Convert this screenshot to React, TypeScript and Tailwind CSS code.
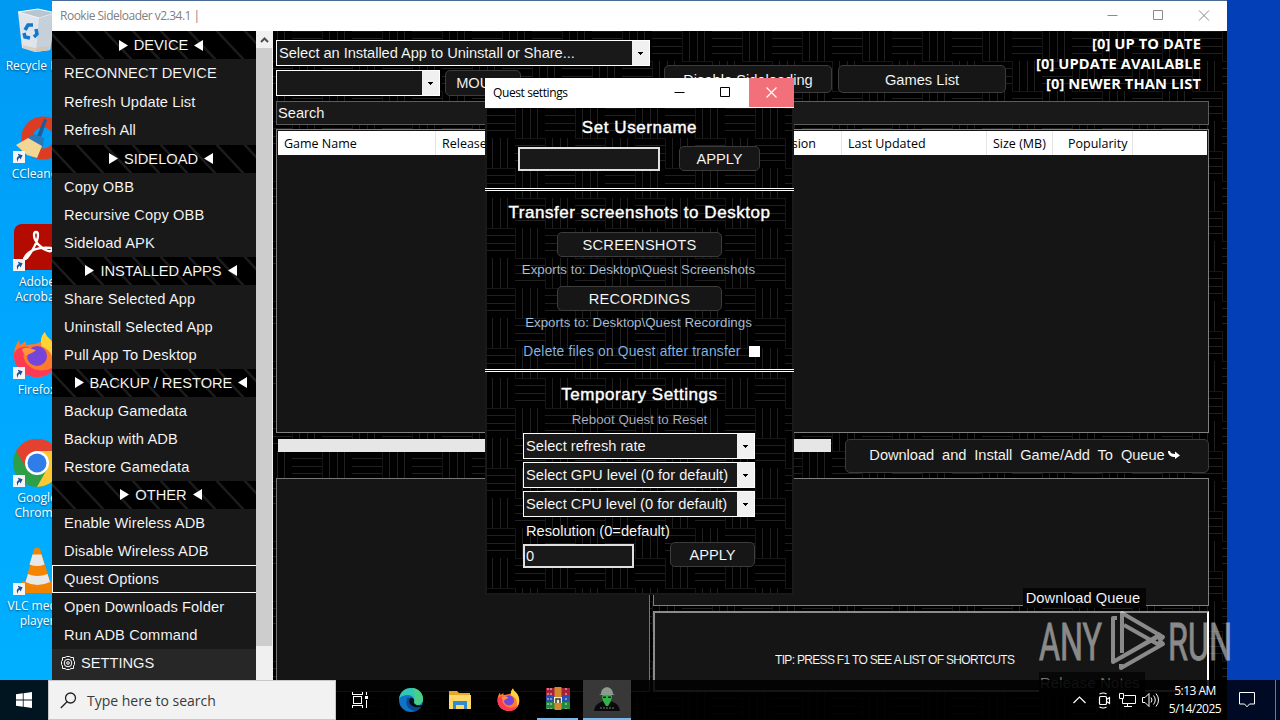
import type { ReactNode } from "react";

const ARIAL = "font-['Liberation_Sans',sans-serif] [-webkit-text-stroke:0.1px_#161616]";
const SEGOE = "font-['Open_Sans','Noto_Sans',sans-serif] [-webkit-text-stroke:0]";
const HEADING = "relative top-px whitespace-nowrap text-center text-[17px] leading-5 tracking-[0.550px] [-webkit-text-stroke:0.4px_#fff]";

function Weave({ id, dx = 0, dy = 0 }: { id: string; dx?: number; dy?: number }) {
  return (
    <svg className="absolute inset-0 h-full w-full" aria-hidden="true">
      <defs>
        <pattern id={id} x={dx} y={dy} width="60" height="60" patternUnits="userSpaceOnUse" shapeRendering="crispEdges">
          <rect width="60" height="60" fill="#000" />
          <path d="M0 .5H30M30 30.5H60M30.5 0V30M.5 30V60" stroke="#161616" fill="none" />
          <path
            d="M0 7.5H30M0 15.5H30M0 22.5H30M30 37.5H60M30 45.5H60M30 52.5H60M37.5 0V30M45.5 0V30M52.5 0V30M7.5 30V60M15.5 30V60M22.5 30V60"
            stroke="#202020"
            fill="none"
          />
        </pattern>
      </defs>
      <rect width="100%" height="100%" fill={`url(#${id})`} />
    </svg>
  );
}

function Shortcut() {
  return (
    <svg className="absolute bottom-0 left-0" width="12" height="12" viewBox="0 0 12 12">
      <rect width="12" height="12" fill="#f4f4f4" />
      <path d="M3 10c-.6-3 .6-5 3.300-5V2.500L10 6 6.300 9V7C4.800 7 3.600 8 3 10z" fill="#1c4f9c" transform="rotate(-25 6 6)" />
    </svg>
  );
}

const desktopIcons: { label: string; label2?: string; link: boolean; top: string; art: ReactNode }[] = [
  {
    label: "Recycle Bin",
    link: false,
    top: "top-[7px]",
    art: (
      <svg width="48" height="48" viewBox="0 0 48 48">
        <path d="M5 5l20-3 18 4-6 37-15 2-13-4z" fill="#dfe5ea" />
        <path d="M5 5l20-3 18 4-17 5z" fill="#b9c6cf" stroke="#f4f7f9" />
        <path d="M26 11l17-5-6 37-14 2z" fill="#c6d0d8" />
        <path d="M10 38l12 3 14-2-1 4-12 2-13-4z" fill="#d8bfa2" opacity=".6" />
        <g fill="none" stroke="#1178d0" strokeWidth="3.500">
          <path d="M12 23l3-5h5M23 22l1 5-3 3M17 31l-5-1-1-4" />
        </g>
      </svg>
    ),
  },
  {
    label: "CCleaner",
    link: true,
    top: "top-[115px]",
    art: (
      <svg width="48" height="48" viewBox="0 0 48 48">
        <circle cx="30" cy="23" r="16" fill="none" stroke="#dc3c22" strokeWidth="11" />
        <path d="M31 4l3 1-6 17-4-1z" fill="#1d5c99" />
        <path d="M14 23l7-4 10 4-1 9-12-3z" fill="#2b78b8" />
        <path d="M3 30l12-7 14 8-5 12-10-3z" fill="#f3d694" />
      </svg>
    ),
  },
  {
    label: "Adobe",
    label2: "Acrobat",
    link: true,
    top: "top-[223px]",
    art: (
      <svg width="48" height="48" viewBox="0 0 48 48">
        <rect x="1" y="1" width="46" height="46" rx="8" fill="#b30b00" />
        <path d="M12 34c3-6 14-11 26-9 3 1 1 4-3 3-6-2-14-9-14-16 0-4 4-4 4 0 0 7-7 18-11 23-2 2-4 1-2-1z" fill="none" stroke="#fff" strokeWidth="2.300" />
      </svg>
    ),
  },
  {
    label: "Firefox",
    link: true,
    top: "top-[331px]",
    art: (
      <svg width="48" height="48" viewBox="0 0 48 48">
        <Fox />
      </svg>
    ),
  },
  {
    label: "Google",
    label2: "Chrome",
    link: true,
    top: "top-[439px]",
    art: (
      <svg width="48" height="48" viewBox="0 0 48 48">
        <circle cx="24" cy="24" r="24" fill="#2c9f48" />
        <path d="M3.200 12A24 24 0 0 1 45 12H24z" fill="#e5412f" />
        <path d="M3.200 12L14 30l10-18z" fill="#e5412f" />
        <path d="M24 12h21a24 24 0 0 1-21 36l10-18z" fill="#fcc934" />
        <circle cx="24" cy="24" r="12" fill="#fff" />
        <circle cx="24" cy="24" r="9.500" fill="#2f7de9" />
      </svg>
    ),
  },
  {
    label: "VLC media",
    label2: "player",
    link: true,
    top: "top-[547px]",
    art: (
      <svg width="48" height="48" viewBox="0 0 48 48">
        <path d="M9 34h32l5 12H8z" fill="#f08300" />
        <path d="M21 2q3-3 6 0l11 35q-14 7-26 0z" fill="#f58400" />
        <path d="M19.500 7.500h9l3 10q-7 3-15 0zM15 27q9 4 19.500 0l2.500 8q-13 6-24.500 0z" fill="#e8e8e8" />
      </svg>
    ),
  },
];

function Fox() {
  return (
    <g>
      <path d="M28 10C28 5 31 2 32 1c1 5 6 7 9 12 9 14 1 33-16 33C11 46 1 37 1 24 1 17 4 12 6 9l1 5 6-4v4c5-1 11 0 15-4z" fill="#ff7a2a" />
      <path d="M28 10C28 5 31 2 32 1c1 5 6 7 9 12 5 9 4 19-2 26 3-11 0-20-11-24z" fill="#ffd336" />
      <path d="M1 24c0 14 11 22 24 22 8 0 15-4 18-13-6 9-25 9-31-3-3-6-1-11 4-14C8 15 2 18 1 24z" fill="#fb3a55" />
      <circle cx="24" cy="25" r="10" fill="#7544d9" />
      <path d="M9 18c6-3 9 0 14 1-4 4-7 3-9 6-2-1-5-4-5-7z" fill="#ff9440" />
    </g>
  );
}

type Entry = { text: string; kind: "head" | "item" | "active"; tall?: boolean };

const menu: Entry[] = [
  { text: "DEVICE", kind: "head" },
  { text: "RECONNECT DEVICE", kind: "item", tall: true },
  { text: "Refresh Update List", kind: "item", tall: true },
  { text: "Refresh All", kind: "item", tall: true },
  { text: "SIDELOAD", kind: "head" },
  { text: "Copy OBB", kind: "item" },
  { text: "Recursive Copy OBB", kind: "item" },
  { text: "Sideload APK", kind: "item" },
  { text: "INSTALLED APPS", kind: "head" },
  { text: "Share Selected App", kind: "item" },
  { text: "Uninstall Selected App", kind: "item" },
  { text: "Pull App To Desktop", kind: "item" },
  { text: "BACKUP / RESTORE", kind: "head" },
  { text: "Backup Gamedata", kind: "item" },
  { text: "Backup with ADB", kind: "item" },
  { text: "Restore Gamedata", kind: "item" },
  { text: "OTHER", kind: "head" },
  { text: "Enable Wireless ADB", kind: "item" },
  { text: "Disable Wireless ADB", kind: "item" },
  { text: "Quest Options", kind: "active" },
  { text: "Open Downloads Folder", kind: "item" },
  { text: "Run ADB Command", kind: "item" },
];

function Tri({ flip = false }: { flip?: boolean }) {
  return (
    <svg width="9" height="11" viewBox="0 0 10 12" className="shrink-0">
      <path d={flip ? "M10 0v12L0 6z" : "M0 0v12l10-6z"} fill="#fff" />
    </svg>
  );
}

function MenuEntry({ e }: { e: Entry }) {
  if (e.kind === "head") {
    return (
      <div className="relative h-7 shrink-0 overflow-hidden bg-black pl-[14px]">
        <svg className="absolute inset-0" width="204" height="28">
          <path
            d="M-5 -2l30 32M23 -2l30 32M51 -2l30 32M79 -2l30 32M107 -2l30 32M135 -2l30 32M163 -2l30 32M191 -2l30 32"
            stroke="#1c1c1c"
            strokeWidth="2.500"
          />
        </svg>
        <div className="relative flex h-full items-center justify-center gap-[6px] whitespace-nowrap">
          <Tri />
          <span>{e.text}</span>
          <Tri flip />
        </div>
      </div>
    );
  }
  return (
    <div
      className={`flex shrink-0 items-center whitespace-nowrap border pl-[11px] tracking-[0.100px] ${e.tall ? "h-[28.500px]" : "h-7"} ${
        e.kind === "active" ? "border-r-0 border-white" : "border-transparent"
      }`}
    >
      {e.text}
    </div>
  );
}

function Button({ className, children }: { className: string; children: ReactNode }) {
  return (
    <button className={`flex shrink-0 items-center justify-center whitespace-nowrap rounded-[5px] border border-[#3c3c3c] bg-[#161616] ${className}`}>
      {children}
    </button>
  );
}

function Combo({ className, children }: { className: string; children?: ReactNode }) {
  return (
    <div className={`relative flex shrink-0 border border-white bg-[#191919] ${className}`}>
      <span className="flex flex-1 items-center whitespace-nowrap pl-[2px]">{children}</span>
      <span className="flex w-[17px] shrink-0 items-center justify-center bg-[#f0f0f0]">
        <svg width="5" height="3" viewBox="0 0 5 3" shapeRendering="crispEdges">
          <path d="M0 0h5L2.500 3z" fill="#000" />
        </svg>
      </span>
    </div>
  );
}

const columns = [
  { text: "Game Name", cls: "w-[158px] pl-1.5" },
  { text: "Release Name", cls: "w-[250px] pl-1.5" },
  { text: "Version", cls: "w-[156px] justify-end pr-[25px]" },
  { text: "Last Updated", cls: "w-[145px] pl-1.5" },
  { text: "Size (MB)", cls: "w-[66px] pl-1.5" },
  { text: "Popularity", cls: "w-[80px] pl-[15px]" },
];

function MainPanel() {
  return (
    <div className="relative h-[689px] w-[954px] overflow-hidden">
      <Weave id="weave-main" dx={19} />
      <div className="relative flex flex-col pl-[3px]">
        <div className="flex h-[70px] pt-[9px]">
          <div className="flex w-[388px] flex-col gap-1">
            <Combo className="h-[26px] w-[374px]">
              <span className="tracking-[-0.050px]">Select an Installed App to Uninstall or Share...</span>
            </Combo>
            <div className="flex gap-[5px]">
              <Combo className="h-[26px] w-[164px]" />
              <Button className="h-[26px] w-[76px]">MOUNT</Button>
            </div>
          </div>
          <div className="flex w-[342px] gap-1.5 pt-[25px]">
            <Button className="h-7 w-[168px] pt-px">Disable Sideloading</Button>
            <Button className="h-7 w-[168px] pt-px">Games List</Button>
          </div>
          <div className={`-mt-[7px] flex-1 whitespace-nowrap pr-[26px] text-right text-[14.670px] font-bold leading-5 tracking-[0.100px] ${SEGOE}`}>
            <div>[0] UP TO DATE</div>
            <div>[0] UPDATE AVAILABLE</div>
            <div>[0] NEWER THAN LIST</div>
          </div>
        </div>
        <div className="flex h-6 w-[933px] items-center border border-[#5c5c5c] bg-[#191919] pl-px">Search</div>
        <div className="mt-1 h-[304px] w-[933px] border border-[#808080] bg-[#151515] p-px">
          <div className={`flex h-[24px] bg-white text-[12.500px] text-black ${SEGOE}`}>
            {columns.map((c) => (
              <div key={c.text} className={`flex shrink-0 items-center whitespace-nowrap border-r border-[#e5e5e5] pt-0.5 ${c.cls}`}>
                {c.text}
              </div>
            ))}
          </div>
        </div>
        <div className="mt-1.5 flex h-[34px]">
          <div className="ml-[2px] h-[13px] w-[553px] bg-[#e6e6e6]" />
          <Button className="ml-[14px] h-[34px] w-[364px] pb-[3px] pr-[5px]">
            <span className="tracking-[-0.060px] [word-spacing:4px]">Download and Install Game/Add To Queue</span>
            <svg width="12" height="10" viewBox="0 0 12 10" className="ml-[3px]">
              <path d="M0 1h2c0 2 2 3 5 3V1.500L12 5.500 7 9V7C3 7 0 5 0 1z" fill="#fff" />
            </svg>
          </Button>
        </div>
        <div className="mt-[5px] flex gap-[3px]">
          <div className="h-[214px] w-[374px] border border-[#777] bg-[#151515]" />
          <div className="flex flex-col gap-[5px]">
            <div className="relative h-[128px] w-[556px] border border-[#808080] bg-[#151515]">
              <div className="absolute -bottom-[3px] right-[62px] flex h-[20px] w-[123px] items-center justify-center whitespace-nowrap bg-[#050505] pr-[3px] tracking-[0.100px]">
                Download Queue
              </div>
            </div>
            <div className="relative h-[81px] w-[556px] border-2 border-[#8c8c8c] border-r-white bg-[#151515]">
              <div className="mt-[39px] whitespace-nowrap pl-[120px] text-[12px] leading-4 tracking-[-0.680px]">TIP: PRESS F1 TO SEE A LIST OF SHORTCUTS</div>
              <div className="absolute -bottom-1 right-[62px] flex h-[22px] w-[106px] items-center justify-center whitespace-nowrap bg-[#070707] pr-1 tracking-[0.300px] text-[#777]">
                Release Notes
              </div>
            </div>
          </div>
        </div>
      </div>
    </div>
  );
}

function AppWindow() {
  return (
    <div className="absolute left-[52px] top-0 flex h-[720px] w-[1175px] flex-col overflow-hidden border-t border-[#4a6a94] bg-black">
      <div className={`flex h-[30px] shrink-0 items-center bg-white pl-2 text-[12px] text-[#808080] ${SEGOE}`}>
        <span className="flex-1 tracking-[-0.500px]">Rookie Sideloader v2.34.1 |</span>
        <svg width="120" height="30" viewBox="0 0 120 30" fill="none" stroke="#8a8a8a">
          <path d="M0.500 14.500h10M46.500 9.500h9v9h-9zM92 9.500l10 10M102 9.500l-10 10" />
        </svg>
      </div>
      <div className={`flex text-[14.670px] text-white ${ARIAL}`}>
        <div className="flex h-[661px] w-[204px] shrink-0 flex-col bg-[#191919]">
          {menu.map((e) => (
            <MenuEntry key={e.text} e={e} />
          ))}
          <div className="flex flex-1 items-start gap-[6px] bg-[#272727] pl-[9px] pt-1.5">
            <svg width="14" height="14" viewBox="0 0 14 14" fill="none" stroke="#fff" className="mt-px">
              <path d="M4 1.500l1.500-1h3l1.500 1h2.500V4l1 1.500v3l-1 1.500v2.500H10l-1.500 1h-3l-1.500-1H1.500V10l-1-1.500v-3l1-1.500V1.500z" />
              <circle cx="7" cy="7" r="3.800" />
              <circle cx="7" cy="7" r="1.300" />
            </svg>
            <span className="leading-[17px]">SETTINGS</span>
          </div>
        </div>
        <div className="flex h-[661px] w-[17px] shrink-0 flex-col bg-[#f0f0f0]">
          <svg width="17" height="17" viewBox="0 0 17 17" fill="none" stroke="#505050" strokeWidth="2">
            <path d="M5 11l3.500-3.500L12 11" />
          </svg>
          <div className="h-[598px] w-[16px] bg-[#cdcdcd]" />
        </div>
        <MainPanel />
      </div>
    </div>
  );
}

function Divider() {
  return <div className="h-[3px] w-full shrink-0 border-y border-white bg-black" />;
}

function QuestDialog() {
  return (
    <div className={`absolute left-[485px] top-[78px] flex h-[517px] w-[309px] flex-col overflow-hidden text-white ${ARIAL}`}>
      <div className={`flex h-[30px] shrink-0 bg-white text-[12px] text-black ${SEGOE}`}>
        <span className="flex flex-1 items-center pl-2 tracking-[-0.400px]">Quest settings</span>
        <svg width="90" height="29" viewBox="0 0 90 29" fill="none" stroke="#000">
          <path d="M15.500 14.500h10M61.500 9.500h9v9h-9z" />
        </svg>
        <div className="flex h-[29px] w-[45px] items-center justify-center bg-[#f1707a]">
          <svg width="11" height="11" viewBox="0 0 11 11" stroke="#fff" strokeWidth="1.200" fill="none">
            <path d="M.5 .5l10 10M10.500 .5l-10 10" />
          </svg>
        </div>
      </div>
      <div className="relative flex-1 border-x-2 border-b-2 border-[#191919] text-[14.670px]">
        <Weave id="weave-dialog" dx={-2} />
        <div className="relative -mx-0.5 flex flex-col">
          <div className="flex h-[80px] flex-col pt-[9px]">
            <h2 className={HEADING}>Set Username</h2>
            <div className="mt-[9px] flex gap-[19px] pl-[33px]">
              <div className="mt-px h-[24px] w-[142px] border-2 border-[#e0e0e0] bg-[#191919]" />
              <Button className="h-[25px] w-[81px]">APPLY</Button>
            </div>
          </div>
          <Divider />
          <div className="flex h-[178px] flex-col items-center pt-[11px]">
            <h2 className={HEADING}>Transfer screenshots to Desktop</h2>
            <Button className="mt-[10px] h-[25px] w-[165px]">
              <span className="tracking-[0.200px]">SCREENSHOTS</span>
            </Button>
            <div className="mt-[5px] pr-[2px] text-[13.330px] leading-4 text-[#b0c4de]">Exports to: Desktop\Quest Screenshots</div>
            <Button className="mt-[8px] h-[25px] w-[165px]">
              <span className="tracking-[0.200px]">RECORDINGS</span>
            </Button>
            <div className="mt-[4px] pr-[2px] text-[13.330px] leading-4 text-[#b0c4de]">Exports to: Desktop\Quest Recordings</div>
            <div className="mt-[12px] flex items-center gap-[8px] pl-[4px] text-[13.800px] leading-4 tracking-[0.200px] text-[#87bbe8]">
              <span className="relative top-px">Delete files on Quest after transfer</span>
              <span className="h-[11px] w-[11px] bg-white" />
            </div>
          </div>
          <Divider />
          <div className="flex flex-col pl-[38px] pt-[12px]">
            <h2 className={`-ml-[38px] ${HEADING}`}>Temporary Settings</h2>
            <div className="-ml-[38px] mt-[8px] text-center text-[13.330px] leading-4 text-[#b0b8c8]">Reboot Quest to Reset</div>
            <div className="mt-[5px] flex flex-col gap-[3px]">
              <Combo className="h-[26px] w-[232px]">Select refresh rate</Combo>
              <Combo className="h-[26px] w-[232px]">Select GPU level (0 for default)</Combo>
              <Combo className="h-[26px] w-[232px]">Select CPU level (0 for default)</Combo>
            </div>
            <div className="mt-[4px] pl-[3px] leading-5">Resolution (0=default)</div>
            <div className="mt-px flex gap-[36px]">
              <div className="mt-[2px] flex h-6 w-[111px] items-center border-2 border-[#e0e0e0] bg-[#191919] pl-px">0</div>
              <Button className="h-[25px] w-[85px]">APPLY</Button>
            </div>
          </div>
        </div>
      </div>
    </div>
  );
}

function Watermark() {
  return (
    <div className="absolute left-[1038px] top-[610px] flex items-center text-white opacity-50">
      <svg width="200" height="62" viewBox="0 0 200 62" fill="none" stroke="currentColor">
        <g className="font-['Roboto',sans-serif]" stroke="currentColor" strokeWidth=".8" fill="currentColor" fontSize="51">
          <text x="1" y="49.500" textLength="63" lengthAdjust="spacingAndGlyphs">ANY</text>
          <text x="130" y="49.500" textLength="64" lengthAdjust="spacingAndGlyphs">RUN</text>
        </g>
        <path d="M79 8h-4v44l48-27M84 43V3l41 24-4 4M86 15l37 21M75 52l48-28M83 54v4l42-24-4-4" strokeWidth="4" strokeLinejoin="round" />
      </svg>
    </div>
  );
}

function Taskbar() {
  return (
    <div className={`absolute bottom-0 left-0 flex h-10 w-full bg-black/85 text-white ${SEGOE}`}>
      <div className="flex w-12 items-center justify-center bg-[#00151f]">
        <svg width="16" height="16" viewBox="0 0 16 16" fill="#fff">
          <path d="M0 2.200L6.800 1.300v6.300H0zM7.600 1.200L16 0v7.600H7.600zM0 8.400h6.800v6.300L0 13.800zM7.600 8.400H16V16l-8.400-1.200z" />
        </svg>
      </div>
      <div className="flex w-[288px] items-center border border-[#c8c8c8] bg-[#f2f2f2] pl-[11px] text-[14px] text-[#3a3a3a]">
        <svg width="17" height="17" viewBox="0 0 17 17" fill="none" stroke="#222" strokeWidth="1.300" className="mr-[10px]">
          <circle cx="10.500" cy="6" r="5" />
          <path d="M7 9.700L.8 16" />
        </svg>
        <span className="pt-px">Type here to search</span>
      </div>
      <div className="flex w-12 items-center justify-center">
        <svg width="16" height="16" viewBox="0 0 16 16" fill="none" stroke="#fff" shapeRendering="crispEdges">
          <path d="M.5 0v2.500h10V0M.5 16v-2.500h10V16M1.500 4.500h8v7h-8zM14.500 0v3M14.500 8v8" />
          <path d="M13 4h3v3h-3z" fill="#fff" stroke="none" />
        </svg>
      </div>
      <div className="flex w-[54px] items-center justify-center">
        <svg width="24" height="24" viewBox="0 0 24 24">
          <circle cx="12" cy="12" r="12" fill="#1173c6" />
          <path d="M0 11C1 3 7 0 12 0c8 0 12 6 12 11 0 4-3 6-6 6-3 0-4-1-3-3 1-4-2-7-6-7-4 0-7 1-9 4z" fill="#32c6b4" />
          <path d="M13 0c7 0 11 6 11 11 0 4-3 6-6 6-3 0-4-1-3-3 2-5 1-10-2-14z" fill="#52d472" opacity=".7" />
          <path d="M9 9c-4 5-1 13 7 14 2 0 5-2 6-4-8 2-13-4-11-8z" fill="#0b4a92" />
          <path d="M11 10c-3 5 2 11 11 9l1-2c-3 1-8 0-8-3 1-2-1-5-4-4z" fill="#02101c" />
        </svg>
      </div>
      <div className="flex w-[44px] items-center justify-center">
        <svg width="22" height="20" viewBox="0 0 22 20">
          <path d="M0 1h8l2 2h11v15H0z" fill="#e9a827" />
          <path d="M0 5h22v14H0z" fill="#ffd868" />
          <path d="M4 19v-8h14v8h-3v-4H7v4z" fill="#2f8bd0" />
        </svg>
      </div>
      <div className="flex w-[54px] items-center justify-center">
        <svg width="24" height="24" viewBox="0 0 48 48">
          <Fox />
        </svg>
      </div>
      <div className="ml-px flex w-[41px] items-center justify-center border-b-2 border-[#76b9ed]">
        <svg width="24" height="24" viewBox="0 0 24 24">
          <path d="M0 1h24v7H0z" fill="#a82038" />
          <path d="M0 8h24v7H0z" fill="#2a4fae" />
          <path d="M0 15h24v7H0z" fill="#238a3c" />
          <path d="M2 1v21M5 1v21M20 1v21" stroke="#ddd" strokeDasharray="2 3" />
          <path d="M8.500 0h7v23h-7z" fill="#d48a2c" />
          <path d="M8 10h8v6H8z" fill="#f0e6c8" />
          <path d="M10 16v-4h4v4" stroke="#333" fill="none" strokeWidth="1.500" />
        </svg>
      </div>
      <div className="ml-[5px] flex w-12 items-center justify-center border-b-2 border-[#76b9ed] bg-[#383838]">
        <svg width="26" height="24" viewBox="0 0 26 24">
          <path d="M0 24c1-7 5-8 9-10h8c4 2 8 3 9 10z" fill="#0a0a0a" />
          <path d="M9 6h8l1 4-1 4-3 5h-2l-3-5-1-4z" fill="#31b44b" />
          <path d="M7 7c0-9 12-9 12 0l2 1H5z" fill="#8d9a90" />
          <path d="M9 9.500h3v1.500H9zM14 9.500h3v1.500h-3z" fill="#052b0c" />
          <path d="M6 21h14" stroke="#777" strokeDasharray="2 1" />
        </svg>
      </div>
      <div className="flex-1" />
      <div className="flex w-[90px] items-center">
        <svg width="13" height="8" viewBox="0 0 13 8" fill="none" stroke="#fff" strokeWidth="1.200" className="mr-[12px] shrink-0">
          <path d="M.5 7l6-6 6 6" />
        </svg>
        <svg width="13" height="17" viewBox="0 0 13 17" fill="none" stroke="#fff" strokeWidth="1.200" className="mr-[8px] shrink-0">
          <rect x="1.500" y="4.500" width="7" height="8" rx="1" />
          <path d="M8.500 7.500l3-2v6l-3-2M1.500 2q4-2 7 0M1.500 15q4 2 7 0" />
        </svg>
        <svg width="17" height="15" viewBox="0 0 17 15" fill="none" stroke="#fff" className="mr-[6px] shrink-0">
          <path d="M5.500 2.500h11v8H3.500V6M.5 .5h4v5h-4zM8.500 10.500v3M5 13.500h8" />
        </svg>
        <svg width="18" height="14" viewBox="0 0 18 14" fill="none" stroke="#fff" className="shrink-0">
          <path d="M.5 4.500h2.500l4-4v13l-4-4H.5zM9 4.500q2 2.500 0 5M11.500 2.500q3.500 4.500 0 9M14 .5q5 6.500 0 13" />
        </svg>
      </div>
      <div className="w-[64px] pt-0.5 text-center text-[12px] leading-[18px] tracking-[-0.500px]">
        <div>5:13 AM</div>
        <div>5/14/2025</div>
      </div>
      <div className="flex w-[53px] items-center bg-[#000a24] pl-[12px]">
        <svg width="16" height="16" viewBox="0 0 16 16" fill="none" stroke="#fff">
          <path d="M.5 .5h15v11.500h-5L8 14.800 5.500 12h-5z" />
        </svg>
        <div className="ml-5 h-10 w-px bg-[#777]" />
      </div>
    </div>
  );
}

export default function App() {
  return (
    <div className="relative h-[720px] w-[1280px] overflow-hidden bg-[#0340b8]">
      <div className="absolute left-0 top-0 h-full w-[640px] bg-linear-to-b from-[#0099f2] via-[#00a8ff] to-[#00b0ff]" />
      {desktopIcons.map((d) => (
        <div key={d.label} className={`absolute left-0 flex w-[74px] flex-col items-center text-[12px] leading-[15px] text-white ${SEGOE} ${d.top}`}>
          <div className="relative h-[48px] w-12">
            {d.art}
            {d.link && <Shortcut />}
          </div>
          <span className="mt-[3px] whitespace-nowrap [text-shadow:0_1px_2px_#0008]">{d.label}</span>
          {d.label2 && <span className="[text-shadow:0_1px_2px_#0008]">{d.label2}</span>}
        </div>
      ))}
      <AppWindow />
      <QuestDialog />
      <Watermark />
      <Taskbar />
    </div>
  );
}
